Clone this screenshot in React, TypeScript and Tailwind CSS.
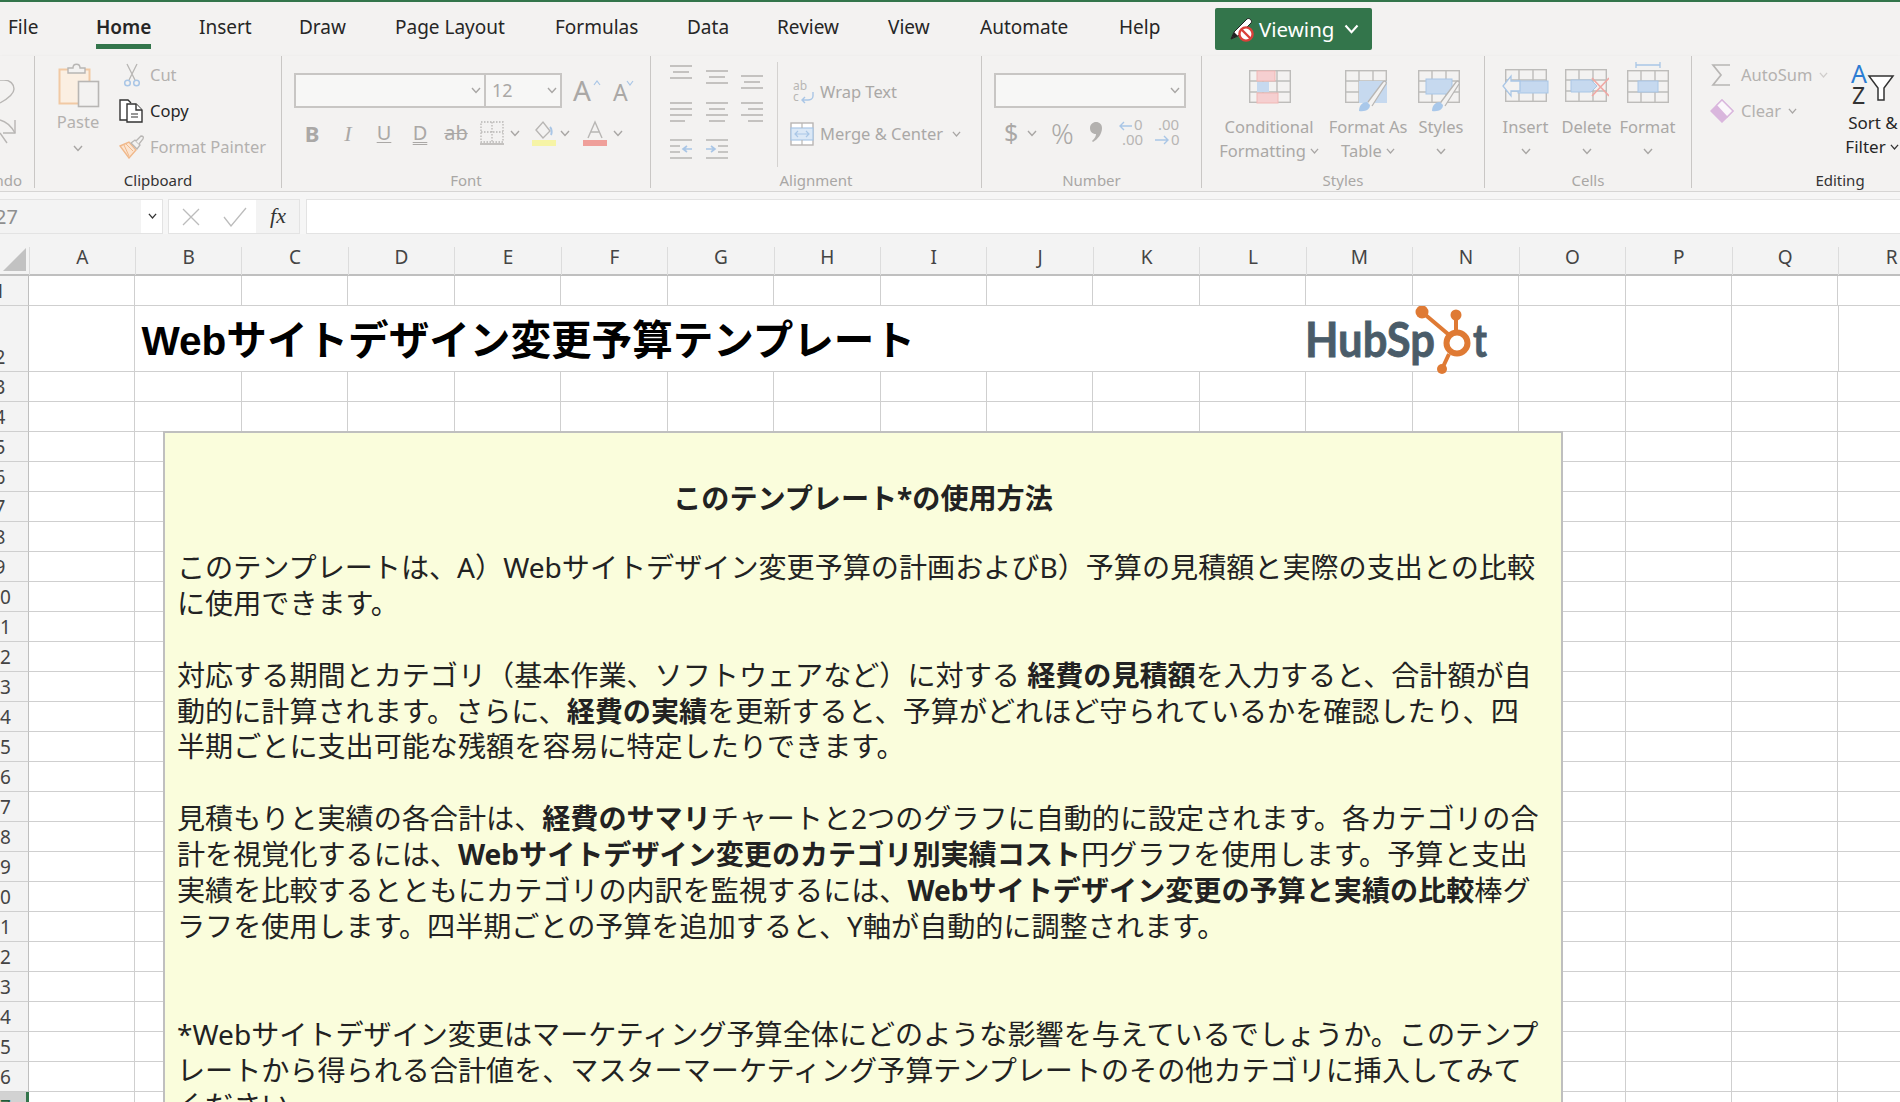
import type { ReactNode } from 'react';

const G = '#b8b6b4';
const BLUE = '#a9c6e6';
const FILL = '#c6d9ef';
const RED = '#f0b7b5';
const RED_FILL = '#f5cfd0';

// Small chevron used all over the ribbon
function Chev({ cls = 'text-[#a8a6a4]', size = 10 }: { cls?: string; size?: number }) {
  return (
    <svg width={size} height={size * 0.7} viewBox="0 0 10 7" className={cls} fill="none" stroke="currentColor" strokeWidth="1.4">
      <path d="M1 1l4 4.5L9 1" />
    </svg>
  );
}

function Lines({ rows }: { rows: [number, number, number][] }) {
  return (
    <svg width="24" height="24" viewBox="0 0 24 24" stroke={G} strokeWidth="1.6">
      {rows.map(([a, b, y], i) => (
        <line key={i} x1={a} x2={b} y1={y} y2={y} />
      ))}
    </svg>
  );
}

function Grid({ w = 42, h = 33, cols = 3, rows = 3 }: { w?: number; h?: number; cols?: number; rows?: number }) {
  const xs = Array.from({ length: cols - 1 }, (_, i) => ((i + 1) * w) / cols);
  const ys = Array.from({ length: rows - 1 }, (_, i) => ((i + 1) * h) / rows);
  return (
    <g stroke="#bdbcba" strokeWidth="1.4" fill="none">
      <rect x="0.7" y="0.7" width={w - 1.4} height={h - 1.4} />
      {xs.map(x => <line key={x} x1={x} x2={x} y1="0" y2={h} />)}
      {ys.map(y => <line key={y} x1="0" x2={w} y1={y} y2={y} />)}
    </g>
  );
}

function Brush({ x, y }: { x: number; y: number }) {
  return (
    <g transform={`translate(${x} ${y})`}>
      <path d="M2 31c0-6 4-9 8-9l3 3c0 4-4 7-11 6z" fill="#a9c8ea" />
      <path d="M11 22L26 2c2-2 4 0 3 2L15 26" fill="#f3f2f1" stroke="#b8b6b4" strokeWidth="1.3" />
    </g>
  );
}

function PasteIcon() {
  return (
    <svg width="42" height="46" viewBox="0 0 42 46" fill="none">
      <rect x="1.5" y="7.5" width="30" height="34" fill="#fbefe2" stroke="#f1c9a4" strokeWidth="2" />
      <path d="M10 11V6h5c0-5 7-5 7 0h5v5z" fill="#f3f2f1" stroke="#b8b6b4" strokeWidth="1.4" />
      <rect x="20.5" y="19.5" width="20" height="25" fill="#f3f2f1" stroke="#b8b6b4" strokeWidth="1.6" />
    </svg>
  );
}

function CutIcon() {
  return (
    <svg width="18" height="24" viewBox="0 0 18 24" fill="none">
      <path d="M4 1l8 16M14 1L6 17" stroke="#b8b6b4" strokeWidth="1.3" />
      <circle cx="4.5" cy="20" r="2.8" stroke={BLUE} strokeWidth="1.5" />
      <circle cx="13.5" cy="20" r="2.8" stroke={BLUE} strokeWidth="1.5" />
    </svg>
  );
}

function CopyIcon() {
  return (
    <svg width="24" height="24" viewBox="0 0 24 24" fill="#fff" stroke="#333" strokeWidth="1.4">
      <path d="M8 21H1V1h8l3 3" />
      <path d="M8 5h9l6 6v12H8z" />
      <path d="M17 5v6h6" />
      <path d="M12 15h7M12 18h7" strokeWidth="1.1" />
    </svg>
  );
}

function PainterIcon() {
  return (
    <svg width="26" height="24" viewBox="0 0 26 24" fill="none">
      <path d="M1 11l9-4 7 8-7 8z" fill="#fbe4d0" stroke="#f0b88a" strokeWidth="1.4" />
      <path d="M7 9l7 7M5 10l5 11" stroke="#f0b88a" strokeWidth="1" />
      <path d="M12 8l4-3 5 5-3 4z" fill="#f3f2f1" stroke="#b8b6b4" strokeWidth="1.3" />
      <path d="M17 6l5-5c2 0 3 1 2 3l-4 5" fill="#f3f2f1" stroke="#b8b6b4" strokeWidth="1.3" />
    </svg>
  );
}

function PencilBlockIcon() {
  return (
    <svg width="26" height="25" viewBox="0 0 26 25" fill="none">
      <path d="M2 22l3-7L18 2c2-2 6 2 4 4L9 19z" fill="#fff" stroke="#222" strokeWidth="1" />
      <path d="M2 22l3-7 4 4z" fill="#222" />
      <circle cx="17" cy="17" r="6.6" fill="#fff" stroke="#d9403a" strokeWidth="2.4" />
      <path d="M12.5 12.5l9 9" stroke="#d9403a" strokeWidth="2.4" />
    </svg>
  );
}

function Group({ width, label, dark, children }: { width: string; label: string; dark?: boolean; children: ReactNode }) {
  return (
    <div className={`${width} h-[132px] shrink-0 flex flex-col border-r border-[#c9c7c5]`}>
      <div className="h-[116px] flex">{children}</div>
      <div className={`h-[16px] leading-[16px] text-center text-[15px] ${dark ? 'text-[#333]' : 'text-[#a9a7a5]'}`}>{label}</div>
    </div>
  );
}

function SmallRow({ icon, text, dark, after }: { icon: ReactNode; text: string; dark?: boolean; after?: ReactNode }) {
  return (
    <div className="h-[36px] flex items-center">
      <div className="w-[31px] flex">{icon}</div>
      <span className={`text-[16.5px] ${dark ? 'text-[#262626]' : 'text-[#b3b1af]'}`}>{text}</span>
      {after}
    </div>
  );
}

function RibbonBtn({ width, icon, iconBox, lines, last }: { width: string; icon: ReactNode; iconBox: string; lines: string[]; last?: boolean }) {
  return (
    <div className={`${width} flex flex-col items-center text-[16.5px] leading-[24px] text-[#aaa8a6]`}>
      <div className={`${iconBox} flex justify-center`}>{icon}</div>
      {lines.map((l, i) => (
        <div key={l} className="flex items-center gap-[4px] whitespace-nowrap">
          {l}
          {i === lines.length - 1 && last && <Chev size={9} />}
        </div>
      ))}
      {!last && <div className="h-[24px] flex items-center"><Chev /></div>}
    </div>
  );
}

function FontGroup() {
  return (
    <div className="pl-[12px] pt-[17px]">
      <div className="flex h-[35px]">
        <div className="w-[192px] border-2 border-[#c8c6c4] bg-[#f7f7f6] flex items-center justify-end pr-[3px]"><Chev /></div>
        <div className="w-[78px] -ml-[2px] border-2 border-[#c8c6c4] bg-[#f7f7f6] flex items-center justify-between pl-[6px] pr-[3px] text-[18px] text-[#aaa8a6]">12<Chev /></div>
        <div className="w-[40px] ml-[11px] relative text-[28px] leading-[35px] text-[#aaa8a6]">A<svg width="8" height="6" viewBox="0 0 8 6" fill="none" stroke="#a9c6e6" strokeWidth="1.2" className="absolute left-[20px] top-[7px]"><path d="M1 5l3-4 3 4" /></svg></div>
        <div className="w-[30px] relative text-[23px] leading-[38px] text-[#aaa8a6]">A<svg width="8" height="6" viewBox="0 0 8 6" fill="none" stroke="#a9c6e6" strokeWidth="1.2" className="absolute left-[13px] top-[7px]"><path d="M1 1l3 4 3-4" /></svg></div>
      </div>
      <div className="flex h-[36px] mt-[7px] items-center text-[#aaa8a6] text-[22px]">
        <div className="w-[36px] text-center font-bold">B</div>
        <div className="w-[36px] text-center italic font-['Liberation_Serif',serif]">I</div>
        <div className="w-[36px] text-center underline decoration-1 underline-offset-2 text-[20px]">U</div>
        <div className="w-[36px] text-center underline decoration-double decoration-1 underline-offset-2 text-[20px]">D</div>
        <div className="w-[36px] text-center line-through decoration-1 text-[20px]">ab</div>
        <div className="w-[28px] ml-[6px] flex">
          <svg width="24" height="24" viewBox="0 0 24 24" fill="none" stroke="#b8b6b4" strokeWidth="1.3">
            <rect x="1" y="1" width="22" height="20" strokeDasharray="1.5 1.5" />
            <path d="M12 1v20M1 11h22" strokeDasharray="1.5 1.5" />
            <path d="M0 23h24" strokeWidth="1.6" />
          </svg>
        </div>
        <div className="w-[16px] pl-[2px] flex"><Chev /></div>
        <div className="w-[36px] ml-[8px] flex">
          <svg width="24" height="26" viewBox="0 0 24 26" fill="none">
            <path d="M4 10l7-8 7 9-7 7z" stroke="#b8b6b4" strokeWidth="1.4" />
            <path d="M18 7c2 2 2 6 1 8" stroke={BLUE} strokeWidth="2" />
            <rect x="0" y="20" width="24" height="6" fill="#f6f4a6" />
          </svg>
        </div>
        <div className="w-[14px] flex -ml-[8px] mr-[9px]"><Chev /></div>
        <div className="w-[36px] flex">
          <svg width="24" height="26" viewBox="0 0 24 26" fill="none">
            <path d="M5 18L12 2l7 16M8 12h8" stroke="#b8b6b4" strokeWidth="1.4" />
            <rect x="0" y="20" width="24" height="6" fill="#ef9f9a" />
          </svg>
        </div>
        <div className="-ml-[6px] flex"><Chev /></div>
      </div>
    </div>
  );
}

function AlignmentGroup() {
  return (
    <>
      <div className="w-[127px] h-[105px] mt-[6px] border-r border-[#d4d2d0] pl-[19px]">
        <div className="flex h-[40px]">
          <div className="w-[36px]"><Lines rows={[[0, 22, 4], [3, 19, 10], [0, 22, 16]]} /></div>
          <div className="w-[36px] pt-[5px]"><Lines rows={[[0, 22, 4], [3, 19, 10], [0, 22, 16]]} /></div>
          <div className="w-[36px] pt-[10px]"><Lines rows={[[0, 22, 4], [3, 19, 10], [0, 22, 16]]} /></div>
        </div>
        <div className="flex h-[37px]">
          <div className="w-[36px]"><Lines rows={[[0, 22, 1], [0, 22, 7], [0, 22, 13], [0, 15, 19]]} /></div>
          <div className="w-[36px]"><Lines rows={[[0, 22, 1], [3, 19, 7], [0, 22, 13], [3, 19, 19]]} /></div>
          <div className="w-[36px]"><Lines rows={[[0, 22, 1], [7, 22, 7], [0, 22, 13], [7, 22, 19]]} /></div>
        </div>
        <div className="flex">
          <div className="w-[36px]">
            <svg width="24" height="24" viewBox="0 0 24 24" fill="none" stroke={G} strokeWidth="1.6">
              <path d="M0 1h22M0 7h10M0 13h10M0 19h22" />
              <path d="M22 10H13m4-3l-4 3 4 3" stroke={BLUE} />
            </svg>
          </div>
          <div className="w-[36px]">
            <svg width="24" height="24" viewBox="0 0 24 24" fill="none" stroke={G} strokeWidth="1.6">
              <path d="M0 1h22M12 7h10M12 13h10M0 19h22" />
              <path d="M0 10h9M5 7l4 3-4 3" stroke={BLUE} />
            </svg>
          </div>
        </div>
      </div>
      <div className="pl-[12px] text-[16.5px] text-[#aaa8a6]">
        <div className="mt-[21px] h-[30px] flex items-center">
          <div className="w-[30px] pl-[3px] flex">
            <svg width="22" height="24" viewBox="0 0 22 24" fill="none">
              <text x="0" y="10" fontSize="12" fill="#b8b6b4" fontFamily="Noto Sans">ab</text>
              <text x="0" y="21" fontSize="12" fill="#b8b6b4" fontFamily="Noto Sans">c</text>
              <path d="M20 12v4c0 3-3 4-5 4H9m3-3l-3 3 3 3" stroke={BLUE} strokeWidth="1.4" />
            </svg>
          </div>
          Wrap Text
        </div>
        <div className="mt-[12px] h-[30px] flex items-center">
          <div className="w-[30px] flex">
            <svg width="24" height="24" viewBox="0 0 24 24" fill="none">
              <rect x="1" y="1" width="22" height="22" fill="#fff" stroke="#b8b6b4" strokeWidth="1.4" />
              <rect x="1" y="6" width="22" height="12" fill="#dbe8f6" stroke={BLUE} strokeWidth="1.2" />
              <path d="M12 1v5M12 18v5" stroke="#b8b6b4" strokeWidth="1.2" />
              <path d="M5 12h14M8 9l-3 3 3 3M16 9l3 3-3 3" stroke={BLUE} strokeWidth="1.2" />
            </svg>
          </div>
          <span>Merge &amp; Center</span>
          <span className="ml-[9px]"><Chev size={9} /></span>
        </div>
      </div>
    </>
  );
}

function NumberGroup() {
  return (
    <div className="pl-[12px] pt-[17px]">
      <div className="w-[192px] h-[35px] border-2 border-[#c8c6c4] bg-[#f7f7f6] flex items-center justify-end pr-[4px]"><Chev /></div>
      <div className="flex h-[36px] mt-[7px] items-center text-[#aaa8a6]">
        <span className="w-[23px] ml-[10px] text-[25px]">$</span>
        <Chev />
        <span className="ml-[14px] w-[38px] text-[28px] font-light">%</span>
        <svg width="12" height="20" viewBox="0 0 12 20" className="ml-[1px] mr-[17px] -mt-[2px]">
          <path d="M6 0c3.500 0 6 2.500 6 6 0 6-4 11-9 14l-1-1c3-3 4-5 4-7C2 12 0 9.500 0 6c0-3.500 3-6 6-6z" fill="#b3b1af" />
        </svg>
        <svg width="26" height="28" viewBox="0 0 26 28" fill="none">
          <text x="15" y="11" fontSize="15" fill="#b8b6b4" fontFamily="Noto Sans">0</text>
          <text x="3" y="26" fontSize="15" fill="#b8b6b4" fontFamily="Noto Sans">.00</text>
          <path d="M13 7H1m4-4L1 7l4 4" stroke={BLUE} strokeWidth="1.4" />
        </svg>
        <svg width="26" height="28" viewBox="0 0 26 28" fill="none" className="ml-[10px]">
          <text x="3" y="11" fontSize="15" fill="#b8b6b4" fontFamily="Noto Sans">.00</text>
          <text x="16" y="26" fontSize="15" fill="#b8b6b4" fontFamily="Noto Sans">0</text>
          <path d="M0 21h13m-4-4l4 4-4 4" stroke={BLUE} strokeWidth="1.4" />
        </svg>
      </div>
    </div>
  );
}

function StylesGroup() {
  return (
    <div className="pl-[10px] pt-[14px] flex">
      <RibbonBtn
        width="w-[114px]"
        iconBox="h-[45px] pl-[2px]"
        lines={['Conditional', 'Formatting']}
        last
        icon={
          <svg width="42" height="34" viewBox="0 0 42 34">
            <Grid />
            <rect x="8" y="1" width="18" height="10" fill={RED_FILL} stroke={RED} />
            <rect x="8" y="12" width="12" height="10" fill={FILL} />
            <rect x="8" y="23" width="21" height="10" fill={RED_FILL} stroke={RED} />
          </svg>
        }
      />
      <RibbonBtn
        width="w-[84px]"
        iconBox="h-[45px]"
        lines={['Format As', 'Table']}
        last
        icon={
          <svg width="46" height="42" viewBox="0 0 46 42">
            <Grid />
            <rect x="14" y="11" width="28" height="22" fill={FILL} />
            <Brush x={12} y={10} />
          </svg>
        }
      />
      <RibbonBtn
        width="w-[62px]"
        iconBox="h-[45px]"
        lines={['Styles']}
        icon={
          <svg width="46" height="42" viewBox="0 0 46 42">
            <Grid />
            <rect x="8" y="9" width="26" height="15" fill={FILL} stroke={BLUE} />
            <Brush x={12} y={10} />
          </svg>
        }
      />
    </div>
  );
}

function CellsGroup() {
  const box = 'h-[52px] items-end pb-[12px]';
  return (
    <div className="pl-[10px] pt-[7px] flex">
      <RibbonBtn
        width="w-[61px]"
        iconBox={box}
        lines={['Insert']}
        icon={
          <svg width="48" height="34" viewBox="0 0 48 34">
            <g transform="translate(3 0)"><Grid /></g>
            <rect x="16" y="12" width="30" height="12" fill={FILL} stroke={BLUE} />
            <path d="M18 12H9V7L1 17l8 10v-5h9z" fill="#f3f2f1" stroke={BLUE} strokeWidth="1.3" />
          </svg>
        }
      />
      <RibbonBtn
        width="w-[61px]"
        iconBox={box}
        lines={['Delete']}
        icon={
          <svg width="44" height="34" viewBox="0 0 44 34">
            <Grid />
            <path d="M6 11h20l6 6-6 6H6z" fill={FILL} stroke={BLUE} />
            <path d="M27 9l17 18M44 9L27 27" stroke="#f0a8a4" strokeWidth="1.6" />
          </svg>
        }
      />
      <RibbonBtn
        width="w-[61px]"
        iconBox={box}
        lines={['Format']}
        icon={
          <svg width="42" height="41" viewBox="0 0 42 41">
            <path d="M9 3h24M9 0v6M33 0v6" stroke={BLUE} strokeWidth="1.3" />
            <g transform="translate(0 8)"><Grid /></g>
            <rect x="11" y="19" width="20" height="11" fill={FILL} stroke={BLUE} />
          </svg>
        }
      />
    </div>
  );
}

function EditingGroup() {
  return (
    <div className="pl-[18px] pt-[1px] flex">
      <div className="w-[125px]">
        <SmallRow
          text="AutoSum"
          after={<span className="ml-[7px]"><Chev size={9} cls="text-[#cfcdcb]" /></span>}
          icon={
            <svg width="20" height="24" viewBox="0 0 20 24" fill="none" stroke="#b8b6b4" strokeWidth="1.7" className="ml-[1px]">
              <path d="M19 2H2l8 10-8 10h17" />
            </svg>
          }
        />
        <SmallRow
          text="Clear"
          after={<span className="ml-[7px]"><Chev size={9} /></span>}
          icon={
            <svg width="24" height="24" viewBox="0 0 24 24" fill="none">
              <path d="M12 1l11 11-11 11L1 12z" fill="#fff" stroke="#d9b6dd" strokeWidth="1.5" />
              <path d="M6.500 6.500L18 18l-6 5L1 12z" fill="#d9b6dd" />
              <path d="M12 1l11 11-6 6L6.500 6.500z" fill="#fbf8fb" stroke="#d9b6dd" strokeWidth="1.3" />
            </svg>
          }
        />
      </div>
      <div className="w-[76px] flex flex-col items-center text-[16.5px] text-[#262626] leading-[24px]">
        <svg width="44" height="41" viewBox="0 0 44 41" fill="none" className="mt-[6px] -ml-[1px]">
          <text x="0" y="20" fontSize="25" fill="#2b7cd3" fontFamily="Noto Sans">A</text>
          <text x="1" y="41" fontSize="23" fill="#333" fontFamily="Noto Sans">Z</text>
          <path d="M18 13h24l-9 12v12h-6V25z" fill="#fff" stroke="#333" strokeWidth="1.5" />
        </svg>
        <div className="mt-[7px] whitespace-nowrap text-[17px]">Sort &amp;</div>
        <div className="flex items-center gap-[4px] text-[17px] -ml-[2px]">Filter<Chev size={9} cls="text-[#333]" /></div>
      </div>
    </div>
  );
}

function UndoIcons() {
  return (
    <svg width="16" height="66" viewBox="0 0 16 66" fill="none" stroke="#b8b6b4" strokeWidth="1.4">
      <path d="M0 0h4c6 0 10 4 10 9 0 5-5 9-14 14" />
      <path d="M15 40v13H3" />
      <path d="M15 53C10 44 4 41 0 40M0 53l7 10" />
    </svg>
  );
}

function Ribbon() {
  return (
    <div className="flex h-[136px] border-b border-[#d6d5d4] shadow-[0_1px_3px_rgba(0,0,0,0.08)] overflow-hidden">
      <div className="w-[35px] h-[132px] shrink-0 flex flex-col border-r border-[#c9c7c5] overflow-hidden">
        <div className="h-[116px] pt-[24px]"><UndoIcons /></div>
        <div className="h-[16px] leading-[16px] text-[15px] text-[#a9a7a5] flex justify-end pr-[12px]">Undo</div>
      </div>
      <Group width="w-[247px]" label="Clipboard" dark>
        <div className="flex pt-[1px]">
          <div className="ml-[14px] w-[58px] flex flex-col items-center text-[16.5px] text-[#b3b1af]">
            <div className="mt-[5px] ml-[2px]"><PasteIcon /></div>
            <div className="mt-[4px] leading-[20px]">Paste</div>
            <div className="mt-[13px]"><Chev /></div>
          </div>
          <div className="ml-[12px]">
            <SmallRow text="Cut" icon={<div className="ml-[4px]"><CutIcon /></div>} />
            <SmallRow text="Copy" dark icon={<CopyIcon />} />
            <SmallRow text="Format Painter" icon={<PainterIcon />} />
          </div>
        </div>
      </Group>
      <Group width="w-[369px]" label="Font"><FontGroup /></Group>
      <Group width="w-[331px]" label="Alignment"><AlignmentGroup /></Group>
      <Group width="w-[220px]" label="Number"><NumberGroup /></Group>
      <Group width="w-[283px]" label="Styles"><StylesGroup /></Group>
      <Group width="w-[207px]" label="Cells"><CellsGroup /></Group>
      <div className="w-[296px] h-[132px] shrink-0 flex flex-col">
        <div className="h-[116px] flex"><EditingGroup /></div>
        <div className="h-[16px] leading-[16px] text-center text-[15px] text-[#333]">Editing</div>
      </div>
    </div>
  );
}

const tabs = [
  { name: 'File', width: 'w-[88px]' },
  { name: 'Home', width: 'w-[103px]', active: true },
  { name: 'Insert', width: 'w-[100px]' },
  { name: 'Draw', width: 'w-[96px]' },
  { name: 'Page Layout', width: 'w-[160px]' },
  { name: 'Formulas', width: 'w-[132px]' },
  { name: 'Data', width: 'w-[90px]' },
  { name: 'Review', width: 'w-[111px]' },
  { name: 'View', width: 'w-[92px]' },
  { name: 'Automate', width: 'w-[139px]' },
  { name: 'Help', width: 'w-[96px]' },
];

function TabBar() {
  return (
    <div className="h-[54px] flex pl-[8px] text-[19px] text-[#262626]">
      {tabs.map(t => (
        <div key={t.name} className={`${t.width} h-[47px] pt-[10px] shrink-0`}>
          {t.active ? (
            <span className="inline-block h-[37px] leading-[30px] font-semibold border-b-[5px] border-[#33754b]">{t.name}</span>
          ) : (
            <span className="leading-[30px]">{t.name}</span>
          )}
        </div>
      ))}
      <div className="w-[157px] h-[42px] mt-[6px] shrink-0 rounded-[2px] bg-[#33754b] text-white flex items-center pl-[14px]">
        <PencilBlockIcon />
        <span className="ml-[4px] text-[20.5px] pt-[1px]">Viewing</span>
        <span className="ml-[10px]"><Chev size={15} cls="text-white" /></span>
      </div>
    </div>
  );
}

function FormulaBar() {
  return (
    <div className="h-[42px] pt-[7px] bg-[#f6f6f6] flex items-start">
      <div className="w-[163px] h-[35px] flex border-y border-r border-[#e3e3e3] bg-white">
        <div className="w-[141px] bg-[#f3f3f3] text-[#8f8f8f] text-[20px] leading-[33px] -indent-[5px]">27</div>
        <div className="flex-1 flex items-center justify-center pl-[2px]"><Chev size={9} cls="text-[#333]" /></div>
      </div>
      <div className="w-[132px] h-[35px] ml-[5px] flex border border-[#e3e3e3] bg-white">
        <div className="w-[87px] flex items-center pl-[12px] gap-[22px]">
          <svg width="20" height="20" viewBox="0 0 20 20" fill="none" stroke="#bcbcbc" strokeWidth="1.3"><path d="M2 2l16 16M18 2L2 18" /></svg>
          <svg width="24" height="20" viewBox="0 0 24 20" fill="none" stroke="#bcbcbc" strokeWidth="1.3"><path d="M1 10l7 9L23 1" /></svg>
        </div>
        <div className="flex-1 bg-[#f3f3f3] text-center text-[22px] leading-[31px] pl-[1px] italic text-[#333] font-['Liberation_Serif',serif]">fx</div>
      </div>
      <div className="flex-1 h-[35px] ml-[6px] border-y border-l border-[#e3e3e3] bg-white" />
    </div>
  );
}

const columns = 'ABCDEFGHIJKLMNOPQR'.split('');
const rowNumbers = Array.from({ length: 25 }, (_, i) => i + 3);

function ColumnHeader() {
  return (
    <div className="h-[42px] bg-[#f3f3f3] border-b-2 border-[#bfbfbf] flex text-[19px] text-[#444]">
      <div className="w-[28.5px] h-[40px] shrink-0 flex items-end justify-end pr-[3px] pb-[3px]">
        <svg width="23" height="23" viewBox="0 0 23 23"><path d="M23 0v23H0z" fill="#c2c2c2" /></svg>
      </div>
      {columns.map(c => (
        <div key={c} className="w-[106.45px] h-[28px] mt-[13px] shrink-0 border-l border-[#dcdcdc] text-center leading-[20px]">{c}</div>
      ))}
    </div>
  );
}

function RowLabel({ n, h, selected }: { n: number; h: string; selected?: boolean }) {
  return (
    <div className={`w-[29px] ${h} shrink-0 overflow-hidden flex items-end border-b border-[#cfcfcf] ${selected ? 'bg-[#d2d2d2] border-r-[3px] border-r-[#33754b] text-[#1f5c38]' : 'bg-[#f3f3f3] border-r border-r-[#bfbfbf] text-[#444]'}`}>
      <span className="w-[56px] -ml-[28px] shrink-0 text-center text-[19px] leading-[28px]">{n}</span>
    </div>
  );
}

function Cell() {
  return <div className="w-[106.45px] shrink-0 border-r border-b border-[#cfcfcf]" />;
}

function Sheet() {
  return (
    <div className="relative flex-1 overflow-hidden">
      <ColumnHeader />
      <div className="flex h-[30px]">
        <RowLabel n={1} h="h-[30px]" />
        {columns.map(c => <Cell key={c} />)}
      </div>
      <div className="flex h-[66px]">
        <RowLabel n={2} h="h-[66px]" />
        <Cell />
        <div className="w-[1383.85px] shrink-0 border-r border-b border-[#cfcfcf] flex items-center pl-[6px] pt-[6px] font-['Liberation_Sans','Noto_Sans_CJK_JP',sans-serif] font-bold text-[40.6px] text-black whitespace-nowrap">
          Webサイトデザイン変更予算テンプレート
        </div>
        <Cell />
        <Cell />
        <Cell />
        <Cell />
      </div>
      {rowNumbers.map(n => (
        <div key={n} className="flex h-[30px]">
          <RowLabel n={n} h="h-[30px]" selected={n === 27} />
          {columns.map(c => <Cell key={c} />)}
        </div>
      ))}

      <HubSpotLogo />
      <InstructionBox />
    </div>
  );
}

function HubSpotLogo() {
  // logo floats over the grid
  return (
    <svg width="190" height="74" viewBox="0 0 190 74" className="absolute left-[1302px] top-[72px]">
      <text x="3" y="51" fontSize="48" fontWeight="700" fontFamily="Lato" fill="#4a5c69" stroke="#4a5c69" strokeWidth="0.8" textLength="130" lengthAdjust="spacingAndGlyphs">HubSp</text>
      <text x="171" y="51" fontSize="46" fontWeight="700" fontFamily="Lato" fill="#4a5c69" stroke="#4a5c69" strokeWidth="0.8" textLength="14" lengthAdjust="spacingAndGlyphs">t</text>
      <circle cx="155" cy="37" r="10.5" fill="#fff" stroke="#df7a34" strokeWidth="6" />
      <path d="M120 6l26 22M154 9v18M147 48l-7 15" stroke="#df7a34" strokeWidth="4" />
      <circle cx="120" cy="6" r="6.500" fill="#df7a34" />
      <circle cx="154" cy="9" r="5.500" fill="#df7a34" />
      <circle cx="140" cy="63" r="5" fill="#df7a34" />
    </svg>
  );
}

function InstructionBox() {
  return (
    <div className="absolute left-[163px] top-[197px] w-[1400px] h-[760px] border-2 border-[#bfbfbf] bg-[#fafddc] pt-[48px] pl-[12px] text-[28.1px] leading-[35.9px] text-[#222] font-['Noto_Sans','Noto_Sans_CJK_JP',sans-serif] whitespace-nowrap">
      <p className="text-center font-bold pr-[12px] mb-[33px]">このテンプレート*の使用方法</p>
      <p>このテンプレートは、A）Webサイトデザイン変更予算の計画およびB）予算の見積額と実際の支出との比較</p>
      <p className="mb-[35.9px]">に使用できます。</p>
      <p>対応する期間とカテゴリ（基本作業、ソフトウェアなど）に対する <b>経費の見積額</b>を入力すると、合計額が自</p>
      <p>動的に計算されます。さらに、<b>経費の実績</b>を更新すると、予算がどれほど守られているかを確認したり、四</p>
      <p className="mb-[35.9px]">半期ごとに支出可能な残額を容易に特定したりできます。</p>
      <p>見積もりと実績の各合計は、<b>経費のサマリ</b>チャートと2つのグラフに自動的に設定されます。各カテゴリの合</p>
      <p>計を視覚化するには、<b>Webサイトデザイン変更のカテゴリ別実績コスト</b>円グラフを使用します。予算と支出</p>
      <p>実績を比較するとともにカテゴリの内訳を監視するには、<b>Webサイトデザイン変更の予算と実績の比較</b>棒グ</p>
      <p className="mb-[71.8px]">ラフを使用します。四半期ごとの予算を追加すると、Y軸が自動的に調整されます。</p>
      <p>*Webサイトデザイン変更はマーケティング予算全体にどのような影響を与えているでしょうか。このテンプ</p>
      <p>レートから得られる合計値を、マスターマーケティング予算テンプレートのその他カテゴリに挿入してみて</p>
      <p>ください。</p>
    </div>
  );
}

export default function App() {
  return (
    <div className="w-[1900px] h-[1102px] overflow-hidden flex flex-col bg-[#f3f2f1] border-t-2 border-[#33754b] font-['Noto_Sans',sans-serif]">
      <TabBar />
      <Ribbon />
      <FormulaBar />
      <div className="flex-1 flex flex-col bg-white overflow-hidden">
        <Sheet />
      </div>
    </div>
  );
}
